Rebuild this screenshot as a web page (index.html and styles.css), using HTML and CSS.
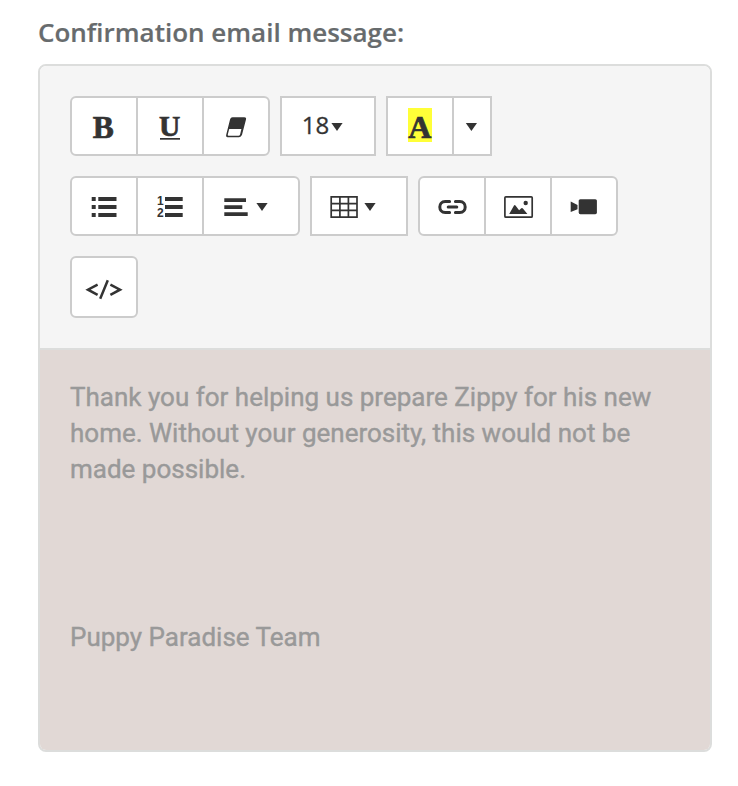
FILE: index.html
```html
<!DOCTYPE html>
<html lang="en">
<head>
  <meta charset="UTF-8">
  <title>Confirmation email</title>
  <link rel="stylesheet" href="styles.css">
</head>
<body>
  <div class="field">
    <div class="field-label" id="message-label">Confirmation email message:</div>

    <div class="editor">
      <div class="toolbar">
        <div class="btn-group rounded">
          <button class="btn" title="Bold">
            <svg class="icon" viewBox="0 0 32 32"><text class="serif" x="15.2" y="28" font-size="31.5">B</text></svg>
          </button>
          <button class="btn" title="Underline">
            <svg class="icon" viewBox="0 0 32 32"><text class="serif" x="15.7" y="26" font-size="29.5">U</text><rect x="6" y="28" width="20" height="1.7"/></svg>
          </button>
          <button class="btn" title="Remove font style">
            <svg class="icon" viewBox="0 0 32 32"><path fill-rule="evenodd" d="M12.5 7.3H24.3Q26.5 7.3 26 9.6L22 24.8Q21.3 27.2 19 27.2H7.6Q5.6 27.2 6.2 24.8L10.1 9.3Q10.7 7.3 12.5 7.3ZM9.2 19L7.8 24.5Q7.5 25.8 8.6 25.8H18.4Q19.7 25.8 20.1 24.5L21.4 19Z"/></svg>
          </button>
        </div>

        <div class="btn-group">
          <button class="btn btn-size" title="Font size">
            <span>18</span><svg class="caret" viewBox="0 0 12 8"><path d="M.4 0H11.6L6 8Z"/></svg>
          </button>
        </div>

        <div class="btn-group">
          <button class="btn" title="Recent color">
            <svg class="icon" viewBox="0 0 32 32"><rect class="highlight" x="4" y="-2" width="24" height="34"/><text class="serif" x="15.8" y="28" font-size="32">A</text></svg>
          </button>
          <button class="btn btn-toggle" title="More colors">
            <svg class="caret" viewBox="0 0 12 8"><path d="M-.2 0H11L5.4 8Z"/></svg>
          </button>
        </div>

        <div class="btn-group rounded">
          <button class="btn" title="Unordered list">
            <svg class="icon" viewBox="0 0 32 32"><path d="M3.7 7h4v4h-4zM3.7 15h4v4h-4zM3.7 23h4v4h-4zM10.3 7h18.2v4H10.3zM10.3 15h18.2v4H10.3zM10.3 23h18.2v4H10.3z"/></svg>
          </button>
          <button class="btn" title="Ordered list">
            <svg class="icon" viewBox="0 0 32 32"><text class="number" x="6.4" y="14.8">1</text><text class="number" x="6.4" y="27">2</text><path d="M11 7h17.7v4H11zM11 15h17.7v4H11zM11 23h17.7v4H11z"/></svg>
          </button>
          <button class="btn btn-menu" title="Paragraph">
            <svg class="icon" viewBox="0 0 32 32"><path d="M4.3 8.3H26V12H4.3zM4.3 15.3h18V19h-18zM4.3 22.3h23.4V26H4.3z"/></svg>
            <svg class="caret" viewBox="0 0 12 8"><path d="M.4 0H11.6L6 8Z"/></svg>
          </button>
        </div>

        <div class="btn-group">
          <button class="btn btn-menu" title="Table">
            <svg class="icon" viewBox="0 0 32 32"><path class="line" d="M3.2 6.8H29V27.2H3.2zM3 13.6H29M3 20.4H29M11.9 6.8V27.2M20.4 6.8V27.2"/></svg>
            <svg class="caret" viewBox="0 0 12 8"><path d="M.4 0H11.6L6 8Z"/></svg>
          </button>
        </div>

        <div class="btn-group rounded">
          <button class="btn" title="Link">
            <svg class="icon" viewBox="0 0 32 32"><path class="line link" d="M13.6 11.6H9.2C2 11.6 2 22.4 9.2 22.4H13.6M19.4 11.6H23.8C31 11.6 31 22.4 23.8 22.4H19.4M12.2 17H20.8"/></svg>
          </button>
          <button class="btn" title="Picture">
            <svg class="icon" viewBox="0 0 32 32"><rect class="line" x="2.9" y="6.8" width="27.3" height="20.4" rx="1"/><circle cx="23.7" cy="13" r="2.2"/><path d="M7.2 24L12 15.5Q12.7 14.5 13.5 15.5L17.1 20.2L19.3 18.3Q20.2 17.6 20.9 18.6L25.4 24Z"/></svg>
          </button>
          <button class="btn" title="Video">
            <svg class="icon" viewBox="0 0 32 32"><rect x="10.7" y="9.2" width="18.2" height="15" rx="1.6"/><path d="M2.7 11.6L9.5 15V19.3L2.7 22Z"/></svg>
          </button>
        </div>

        <div class="btn-group rounded">
          <button class="btn btn-code" title="Code view">
            <svg class="icon" viewBox="0 0 32 32"><path class="line code" d="M9.6 13.6L0 18.7L9.6 23.8M22.4 13.6L32 18.7L22.4 23.8M19.8 9.2L12.2 27.8"/></svg>
          </button>
        </div>
      </div>

      <div class="message" contenteditable="true" spellcheck="false" aria-labelledby="message-label">
        <p>Thank you for helping us prepare Zippy for his new home. Without your generosity, this would not be made possible.</p>
        <p class="signature">Puppy Paradise Team</p>
      </div>
    </div>
  </div>
</body>
</html>
```

FILE: styles.css
```css
* {
  box-sizing: border-box;
}

body {
  margin: 0;
  background-color: #fff;
  color: #333;
  font-family: "Open Sans", sans-serif;
}

.field {
  width: 674px;
  margin-left: 38px;
  padding-top: 14px;
}

.field-label {
  height: 36px;
  margin-bottom: 14px;
  color: #676b6d;
  font-size: 26px;
  font-weight: 600;
  line-height: 36px;
  white-space: nowrap;
  -webkit-text-stroke: 0.2px #676b6d;
}

.editor {
  height: 688px;
  display: flex;
  flex-direction: column;
  border: 2px solid #dcdddc;
  border-radius: 8px;
  overflow: hidden;
}

.toolbar {
  display: flex;
  flex-wrap: wrap;
  gap: 20px 10px;
  padding: 30px;
  background-color: #f5f5f5;
  border-bottom: 2px solid #dcdddc;
}

.btn-group {
  display: flex;
}

.btn {
  display: flex;
  align-items: center;
  justify-content: center;
  width: 68px;
  height: 60px;
  padding: 0;
  border: 2px solid #ccc;
  background-color: #fff;
  color: #333;
  font-family: inherit;
  cursor: pointer;
}

.btn + .btn {
  margin-left: -2px;
}

.rounded .btn:first-child {
  border-top-left-radius: 6px;
  border-bottom-left-radius: 6px;
}

.rounded .btn:last-child {
  border-top-right-radius: 6px;
  border-bottom-right-radius: 6px;
}

.btn-size {
  width: 96px;
  padding-right: 11px;
  font-size: 24px;
}

.btn-size span {
  padding-bottom: 4px;
  -webkit-text-stroke: 0.3px #333;
}

.btn-size .caret {
  margin-left: 2px;
}

.btn-toggle {
  width: 40px;
}

.btn-menu {
  width: 98px;
  justify-content: flex-start;
  gap: 4px;
  padding-left: 16px;
}

.btn-code {
  height: 62px;
}

.icon {
  width: 32px;
  height: 32px;
  flex: none;
  overflow: visible;
  fill: #333;
}

.caret {
  width: 12px;
  height: 8px;
  flex: none;
  margin-top: 2px;
  overflow: visible;
  fill: #333;
}

.serif {
  font-family: "Liberation Serif", serif;
  font-weight: bold;
  text-anchor: middle;
  stroke: #333;
  stroke-width: 0.7;
}

.number {
  font: bold 12px "Liberation Sans", sans-serif;
  text-anchor: middle;
}

.highlight {
  fill: #ffff38;
}

.line {
  fill: none;
  stroke: #333;
  stroke-width: 1.7;
}

.link {
  stroke-width: 3;
  stroke-linecap: round;
}

.code {
  stroke-width: 2.5;
}

.message {
  flex: 1;
  padding: 29px 30px;
  background-color: #e1d8d5;
  color: #999;
  font-family: Roboto, sans-serif;
  font-size: 26px;
  line-height: 36px;
  outline: none;
  -webkit-text-stroke: 0.4px #999;
}

.message p {
  margin: 0;
}

.message .signature {
  margin-top: 132px;
}
```
